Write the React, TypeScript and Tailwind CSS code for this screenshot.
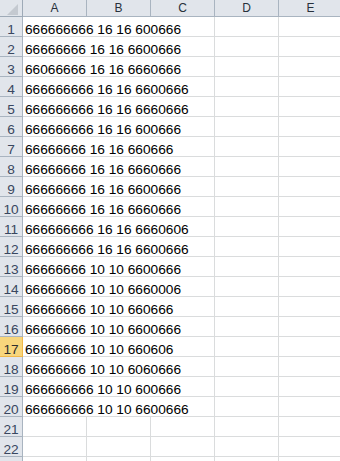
import React from 'react'

const rows: string[] = [
  '666666666 16 16 600666',
  '66666666 16 16 6600666',
  '66066666 16 16 6660666',
  '666666666 16 16 6600666',
  '666666666 16 16 6660666',
  '666666666 16 16 600666',
  '66666666 16 16 660666',
  '66666666 16 16 6660666',
  '66666666 16 16 6600666',
  '66666666 16 16 6660666',
  '666666666 16 16 6660606',
  '666666666 16 16 6600666',
  '66666666 10 10 6600666',
  '66666666 10 10 6660006',
  '66666666 10 10 660666',
  '66666666 10 10 6600666',
  '66666666 10 10 660606',
  '66666666 10 10 6060666',
  '666666666 10 10 600666',
  '666666666 10 10 6600666',
  '',
  '',
  '',
]

const columns = ['A', 'B', 'C', 'D', 'E']
const SELECTED_ROW = 17
// only 4px of row 23 shows, its number sits below the window
const VISIBLE_NUMBERS = 22

const Corner = () => (
  <div className="w-[23px] h-[17px] shrink-0 bg-[#e1e5eb] border-r border-b border-[#9eaab7]">
    <svg width="22" height="16" viewBox="0 0 22 16">
      <polygon points="18,4 18,15 7,15" fill="#c4c9d0" />
    </svg>
  </div>
)

const ColumnHeader = ({ label }: { label: string }) => (
  <div className="w-[64px] h-[17px] shrink-0 bg-[#e1e5eb] border-r border-b border-[#a9b4c0] text-center text-[12px] leading-[16px] text-[#27303b]">
    {label}
  </div>
)

const RowHeader = ({ n }: { n: number }) => {
  const selected = n === SELECTED_ROW
  return (
    <div
      className={
        selected
          ? 'w-[23px] h-[20px] shrink-0 bg-[#f8d67c] border-r border-b border-[#f0b84a] text-center text-[13.7px] leading-[20px] pt-[3px] text-[#2f2f2f]'
          : 'w-[23px] h-[20px] shrink-0 bg-[#e1e5eb] border-r border-b border-[#a9b4c0] text-center text-[13.7px] leading-[20px] pt-[3px] text-[#394760]'
      }
    >
      {n <= VISIBLE_NUMBERS ? n : null}
    </div>
  )
}

const EmptyCell = () => <div className="w-[64px] h-[20px] shrink-0 border-r border-b border-[#dadcdd]" />

export default function App() {
  return (
    <div
      className="w-[340px] h-[461px] overflow-hidden bg-white flex flex-col"
      style={{ fontFamily: '"Liberation Sans", Arial, sans-serif' }}
    >
      <div className="flex">
        <Corner />
        {columns.map(c => (
          <ColumnHeader key={c} label={c} />
        ))}
      </div>
      {rows.map((text, i) => (
        <div key={i} className="flex h-[20px] shrink-0">
          <RowHeader n={i + 1} />
          {text ? (
            <div className="w-[192px] h-[20px] shrink-0 border-r border-b border-[#dadcdd] pl-[2px] pt-[3px] text-[13.7px] leading-[20px] text-black whitespace-nowrap overflow-visible">
              {text}
            </div>
          ) : (
            <>
              <EmptyCell />
              <EmptyCell />
              <EmptyCell />
            </>
          )}
          <EmptyCell />
          <EmptyCell />
        </div>
      ))}
    </div>
  )
}
